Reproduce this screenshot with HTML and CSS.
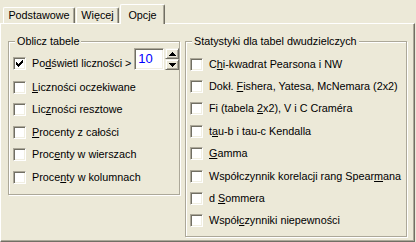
FILE: index.html
```html
<!DOCTYPE html>
<html lang="pl">
<head>
  <meta charset="UTF-8" />
  <title>Opcje</title>
  <link rel="stylesheet" href="styles.css">
</head>
<body>
  <div class="tabs">
    <div class="tab tab-podst">Podstawowe</div>
    <div class="tab tab-wiecej">Więcej</div>
    <div class="tab tab-opcje active">Opcje</div>
  </div>

  <div class="panel">
    <div class="group group-tabele">
      <div class="legend">Oblicz tabele</div>
      <div class="rows">
        <div class="row row-first">
          <label class="check">
            <span class="box"><svg viewBox="0 0 7 7" width="7" height="7" shape-rendering="crispEdges"><path d="M0 2H1V3H2V4H3V3H4V2H5V1H6V0H7V3H6V4H5V5H4V6H3V7H2V6H1V5H0Z" fill="#000"/></svg></span>
            <span>Po<u>d</u>świetl liczności &gt;</span>
          </label>
          <div class="spin-edit">10</div>
          <div class="spin">
            <span class="spin-btn"><svg viewBox="0 0 7 4" width="7" height="4" shape-rendering="crispEdges"><path d="M3 0H4V1H5V2H6V3H7V4H0V3H1V2H2V1H3Z" fill="#000"/></svg></span>
            <span class="spin-btn"><svg viewBox="0 0 7 4" width="7" height="4" shape-rendering="crispEdges"><path d="M0 0H7V1H6V2H5V3H4V4H3V3H2V2H1V1H0Z" fill="#000"/></svg></span>
          </div>
        </div>
        <div class="row"><label class="check"><span class="box"></span><span><u>L</u>iczności oczekiwane</span></label></div>
        <div class="row"><label class="check"><span class="box"></span><span>Lic<u>z</u>ności resztowe</span></label></div>
        <div class="row"><label class="check"><span class="box"></span><span><u>P</u>rocenty z całości</span></label></div>
        <div class="row"><label class="check"><span class="box"></span><span>Proc<u>e</u>nty w wierszach</span></label></div>
        <div class="row"><label class="check"><span class="box"></span><span>Proce<u>n</u>ty w kolumnach</span></label></div>
      </div>
    </div>

    <div class="group group-stat">
      <div class="legend">Statystyki dla tabel dwudzielczych</div>
      <div class="rows">
        <div class="row"><label class="check"><span class="box"></span><span>C<u>h</u>i-kwadrat Pearsona i NW</span></label></div>
        <div class="row"><label class="check"><span class="box"></span><span>Dokł. <u>F</u>ishera, Yatesa, McNemara (2x2)</span></label></div>
        <div class="row"><label class="check"><span class="box"></span><span>Fi (tabela <u>2</u>x2), V i C Craméra</span></label></div>
        <div class="row"><label class="check"><span class="box"></span><span>t<u>a</u>u-b i tau-c Kendalla</span></label></div>
        <div class="row"><label class="check"><span class="box"></span><span><u>G</u>amma</span></label></div>
        <div class="row"><label class="check"><span class="box"></span><span>Współczynnik korelacji rang Spear<u>m</u>ana</span></label></div>
        <div class="row"><label class="check"><span class="box"></span><span>d <u>S</u>ommera</span></label></div>
        <div class="row"><label class="check"><span class="box"></span><span>Współ<u>c</u>zynniki niepewności</span></label></div>
      </div>
    </div>
  </div>
</body>
</html>
```

FILE: styles.css
```css
body {
  margin: 0;
  width: 416px;
  height: 242px;
  overflow: hidden;
  background: #ece9d8;
  color: #000;
  font-family: "Liberation Sans", Arial, sans-serif;
  font-size: 10.8px;
}
.tabs {
  display: flex;
  align-items: flex-end;
  height: 23px;
  padding-left: 3px;
}
.tab {
  box-sizing: border-box;
  height: 16px;
  margin-right: 1px;
  padding-top: 1px;
  border-top: 1px solid #fff;
  border-left: 1px solid #fff;
  border-right: 1px solid #716f64;
  border-radius: 2px 2px 0 0;
  box-shadow: inset -1px 0 0 #aca899;
  background: #ece9d8;
  text-align: center;
  line-height: 13px;
  white-space: nowrap;
}
.tab-podst { width: 72px; }
.tab-wiecej { width: 43px; }
.tab-opcje { width: 45px; }
.tab.active {
  position: relative;
  height: 20px;
  margin-bottom: -1px;
  padding-top: 4px;
}
.panel {
  box-sizing: border-box;
  width: 415px;
  height: 219px;
  padding: 17px 0 0 7px;
  border: 1px solid;
  border-color: #fff #716f64 #716f64 #fff;
  box-shadow: inset -1px -1px 0 #aca899;
  display: flex;
  align-items: flex-start;
  gap: 5px;
}
.group {
  box-sizing: border-box;
  border: 1px solid #aca899;
  box-shadow: inset 1px 1px 0 #fff, 1px 1px 0 #fff;
}
.group-tabele { width: 172px; height: 154px; }
.group-stat { width: 222px; height: 196px; }
.legend {
  width: max-content;
  margin: -7px 0 0 6px;
  padding: 0 2px;
  background: #ece9d8;
  line-height: 13px;
  white-space: nowrap;
}
.rows {
  padding-left: 4px;
}
.row {
  display: flex;
  align-items: center;
  height: 22.5px;
}
.row-first {
  height: 28px;
  align-items: flex-start;
}
.row-first .check {
  margin-top: 9px;
}
.group-stat .rows {
  padding-top: 5px;
}
.group-stat .row {
  height: 22.4px;
}
.check {
  display: flex;
  align-items: center;
  line-height: 13px;
  white-space: nowrap;
}
.box {
  box-sizing: border-box;
  flex: none;
  width: 13px;
  height: 13px;
  margin-right: 6px;
  border: 1px solid;
  border-color: #aca899 #fff #fff #aca899;
  box-shadow: inset 1px 1px 0 #716f64, inset -1px -1px 0 #f1efe2;
  background: #fff;
}
.box svg {
  display: block;
  margin: 2px 0 0 2px;
}
.spin-edit {
  box-sizing: border-box;
  width: 32px;
  height: 22px;
  margin-left: 3px;
  padding-left: 3px;
  border: 1px solid;
  border-color: #aca899 #fff #fff #aca899;
  box-shadow: inset 1px 1px 0 #716f64, inset -1px -1px 0 #f1efe2;
  background: #fff;
  color: #00f;
  font-size: 13px;
  line-height: 20px;
}
.spin {
  display: flex;
  flex-direction: column;
  margin-left: 1px;
}
.spin-btn {
  box-sizing: border-box;
  width: 14px;
  height: 11px;
  border: 1px solid;
  border-color: #f1efe2 #716f64 #716f64 #f1efe2;
  box-shadow: inset 1px 1px 0 #fff, inset -1px -1px 0 #aca899;
  background: #ece9d8;
  display: flex;
  align-items: center;
  justify-content: center;
}
.spin-btn svg {
  display: block;
}
```
